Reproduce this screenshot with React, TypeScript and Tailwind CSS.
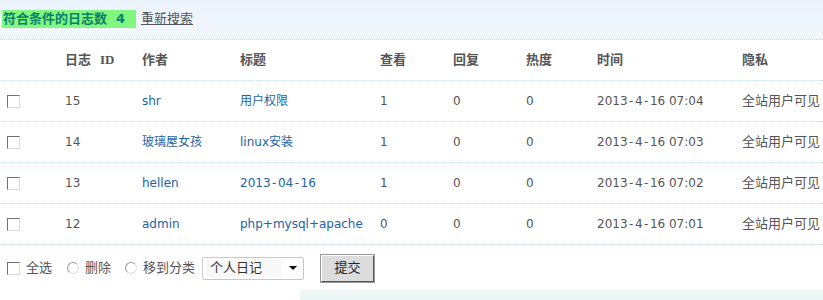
import React from "react";

const latin = "font-['DejaVu_Sans','Noto_Sans_CJK_SC',sans-serif]";

function Dashed({ s }: { s: string }) {
  const parts = s.split("-");
  return (
    <>
      {parts.map((p, i) => (
        <React.Fragment key={i}>
          {i > 0 && <span className="mx-[1.5px]">-</span>}
          {p}
        </React.Fragment>
      ))}
    </>
  );
}

function Check() {
  return (
    <span className="inline-block w-[13px] h-[13px] border border-t-[#707070] border-l-[#707070] border-r-[#dcdcdc] border-b-[#dcdcdc] bg-white" />
  );
}

function Radio() {
  return (
    <span className="inline-block w-[12px] h-[12px] rounded-full border border-[#9a9a9a] border-r-[#dedede] border-b-[#dedede] bg-white" />
  );
}

const rows = [
  { id: "15", author: "shr", title: "用户权限", view: "1", time: "2013-4-16 07:04" },
  { id: "14", author: "玻璃屋女孩", title: "linux安装", view: "1", time: "2013-4-16 07:03" },
  { id: "13", author: "hellen", title: "2013-04-16", view: "1", time: "2013-4-16 07:02" },
  { id: "12", author: "admin", title: "php+mysql+apache", view: "0", time: "2013-4-16 07:01" },
];

const grid = "grid grid-cols-[65px_77px_98px_140px_73px_73px_71px_145px_81px] items-center";

export default function App() {
  return (
    <div className={`w-[823px] h-[300px] bg-white overflow-hidden ${latin} text-[12px] text-[#555]`}>
      <div className="h-[40px] bg-gradient-to-b from-[#ebf3fc] to-[#f3f7fd] border-b border-dotted border-[#c9dcee] flex items-center pl-[2px] pb-[1px]">
        <span className="h-[18px] w-[134px] bg-[#80f880] text-[#0a806a] font-bold text-[13px] leading-[18px] pl-[1px] whitespace-nowrap">
          符合条件的日志数&nbsp; 4
        </span>
        <span className="ml-[5px] underline text-[13px] text-[#555] leading-[18px]">重新搜索</span>
      </div>
      <div className={`${grid} h-[41px] border-b border-dotted border-[#c6e0f0] font-bold text-[13px] text-[#555]`}>
        <div />
        <div className="whitespace-nowrap">
          日志 &nbsp;<span className="font-['Liberation_Serif',serif] text-[13px]">ID</span>
        </div>
        <div>作者</div>
        <div>标题</div>
        <div>查看</div>
        <div>回复</div>
        <div>热度</div>
        <div>时间</div>
        <div>隐私</div>
      </div>
      {rows.map((r) => (
        <div key={r.id} className={`${grid} h-[41px] border-b border-dotted border-[#c6e0f0]`}>
          <div className="pl-[7px] flex items-center">
            <Check />
          </div>
          <div>{r.id}</div>
          <div className="text-[#2262a8] whitespace-nowrap">{r.author}</div>
          <div className="text-[#2262a8] whitespace-nowrap">
            {r.title.includes("-") ? <Dashed s={r.title} /> : r.title}
          </div>
          <div>{r.view}</div>
          <div>0</div>
          <div>0</div>
          <div className="whitespace-nowrap">
            <Dashed s={r.time} />
          </div>
          <div className="whitespace-nowrap text-[13px]">全站用户可见</div>
        </div>
      ))}
      <div className="h-[45px] flex items-center pl-[7px] text-[13px] pt-[1px]">
        <Check />
        <span className="ml-[6px]">全选</span>
        <span className="ml-[15px] flex items-center">
          <Radio />
        </span>
        <span className="ml-[6px]">删除</span>
        <span className="ml-[14px] flex items-center">
          <Radio />
        </span>
        <span className="ml-[6px]">移到分类</span>
        <div className="ml-[7px] w-[102px] h-[23px] border border-[#c8c8c8] rounded-[2px] bg-white flex items-center pl-[3px] pr-[6px]">
          <span className="h-[18px] w-[75px] bg-[#f8f8f8] pl-[4px] leading-[18px] text-[#333]">个人日记</span>
          <span className="ml-auto w-0 h-0 border-l-[4px] border-r-[4px] border-t-[4px] border-l-transparent border-r-transparent border-t-black" />
        </div>
        <div className="ml-[17px] w-[53px] h-[27px] bg-[#dcdcdc] border border-[#fff] border-r-[#555] border-b-[#555] outline outline-1 outline-[#999] flex items-center justify-center text-[#222]">
          提交
        </div>
      </div>
      <div className="ml-[300px] h-[10px] bg-[#edf5f5]" />
    </div>
  );
}
